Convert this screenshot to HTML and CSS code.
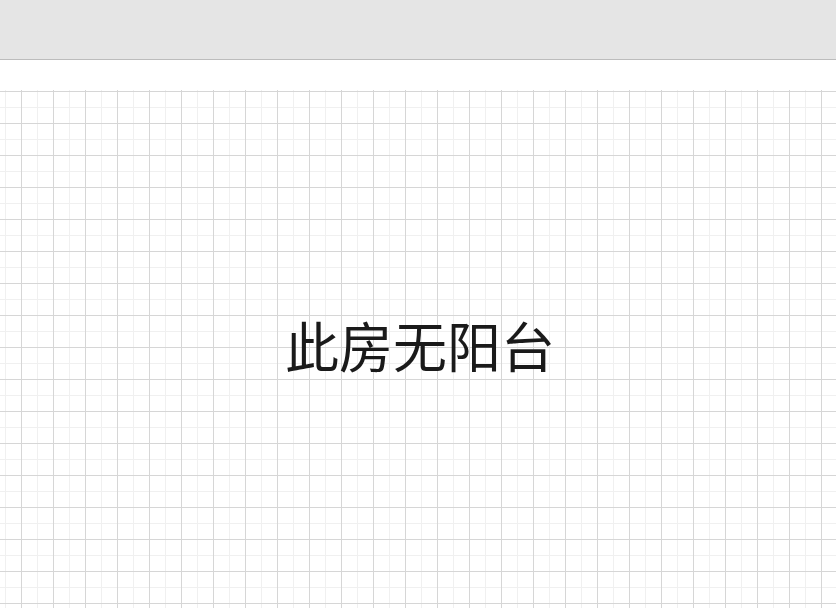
FILE: index.html
```html
<!DOCTYPE html>
<html lang="zh-CN">
<head>
<meta charset="utf-8">
<title>阳台</title>
<link rel="stylesheet" href="styles.css">
</head>
<body>
<div class="topbar"></div>
<div class="spacer"></div>
<main class="canvas">
  <div class="message">此房无阳台</div>
</main>
</body>
</html>
```
FILE: styles.css
```css
html, body {
  margin: 0;
  padding: 0;
  height: 100%;
  overflow: hidden;
  background: #ffffff;
}
body {
  display: flex;
  flex-direction: column;
  font-family: "Noto Sans CJK SC", "Noto Sans", sans-serif;
}
.topbar {
  height: 59px;
  flex: none;
  background: #e5e5e5;
  border-bottom: 1px solid #bcbcbc;
}
.spacer {
  height: 30px;
  flex: none;
  background: #ffffff;
}
.canvas {
  flex: 1;
  display: flex;
  align-items: center;
  justify-content: center;
  padding-left: 4px;
  padding-bottom: 8px;
  background-color: #ffffff;
  background-image:
    linear-gradient(to right, #d6d6d6 1px, transparent 1px),
    linear-gradient(to bottom, #d6d6d6 1px, transparent 1px),
    linear-gradient(to right, #f0f0f0 1px, transparent 1px),
    linear-gradient(to bottom, #f0f0f0 1px, transparent 1px);
  background-size: 32px 32px, 32px 32px, 16px 16px, 16px 16px;
  background-position: 21px 1px, 21px 1px, 5px 1px, 5px 1px;
}
.message {
  font-size: 54px;
  color: #1a1a1a;
  line-height: 1;
}
```
